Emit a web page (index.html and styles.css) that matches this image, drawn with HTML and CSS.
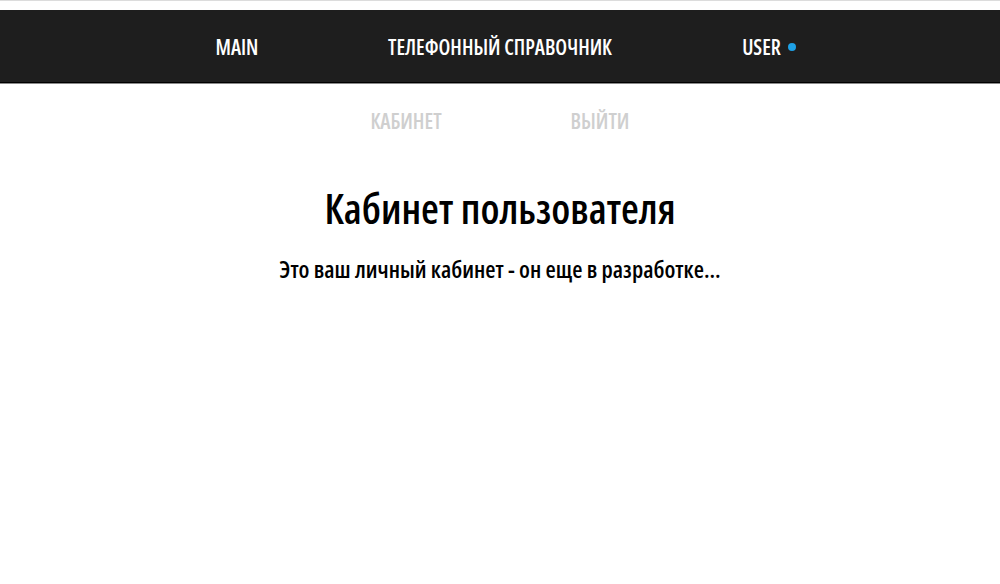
FILE: index.html
```html
<!DOCTYPE html>
<html lang="ru">
<head>
<meta charset="utf-8">
<title>Кабинет пользователя</title>
<link rel="stylesheet" href="styles.css">
</head>
<body>
<div class="topline"></div>
<header class="header">
  <nav class="mainnav">
    <a class="navitem" href="#">MAIN</a>
    <a class="navitem" href="#">ТЕЛЕФОННЫЙ СПРАВОЧНИК</a>
    <a class="navitem navitem-user" href="#">USER<span class="dot"></span></a>
  </nav>
</header>
<nav class="subnav">
  <a class="subitem" href="#">КАБИНЕТ</a>
  <a class="subitem" href="#">ВЫЙТИ</a>
</nav>
<main class="content">
  <h1 class="title">Кабинет пользователя</h1>
  <p class="lead">Это ваш личный кабинет - он еще в разработке...</p>
</main>
</body>
</html>
```

FILE: styles.css
```css
html, body {
  margin: 0;
  padding: 0;
  background: #fff;
}
body {
  font-family: "Open Sans", "DejaVu Sans Condensed", sans-serif;
  font-stretch: 75%;
}
a { text-decoration: none; }
.topline {
  height: 1px;
  background: #dcdcdc;
  margin-bottom: 9px;
}
.header {
  height: 72px;
  background: #1e1e1e;
  border-bottom: 1px solid #000;
  box-shadow: 0 1px 0 #8a8a8a;
  display: flex;
  justify-content: center;
}
.mainnav {
  display: flex;
  align-items: center;
  padding-top: 2px;
}
.navitem {
  box-sizing: border-box;
  width: 263px;
  display: flex;
  justify-content: center;
  align-items: center;
  color: #fff;
  font-size: 20.8px;
  font-weight: 600;
  line-height: 24px;
}
.navitem-user {
  padding-left: 12px;
}
.dot {
  width: 8px;
  height: 8px;
  border-radius: 50%;
  background: #1ea1e6;
  margin-left: 7px;
}
.subnav {
  display: flex;
  justify-content: center;
  padding-top: 26px;
  padding-left: 6px;
}
.subitem {
  width: 194px;
  text-align: center;
  color: #cfcfcf;
  font-size: 21px;
  font-weight: 600;
  line-height: 24px;
}
.content {
  text-align: center;
  color: #000;
}
.title {
  margin: 50px 0 0;
  font-size: 41px;
  font-weight: 600;
  line-height: 50px;
}
.lead {
  margin: 22px 0 0;
  font-size: 23.5px;
  font-weight: 600;
  line-height: 28px;
}
```
